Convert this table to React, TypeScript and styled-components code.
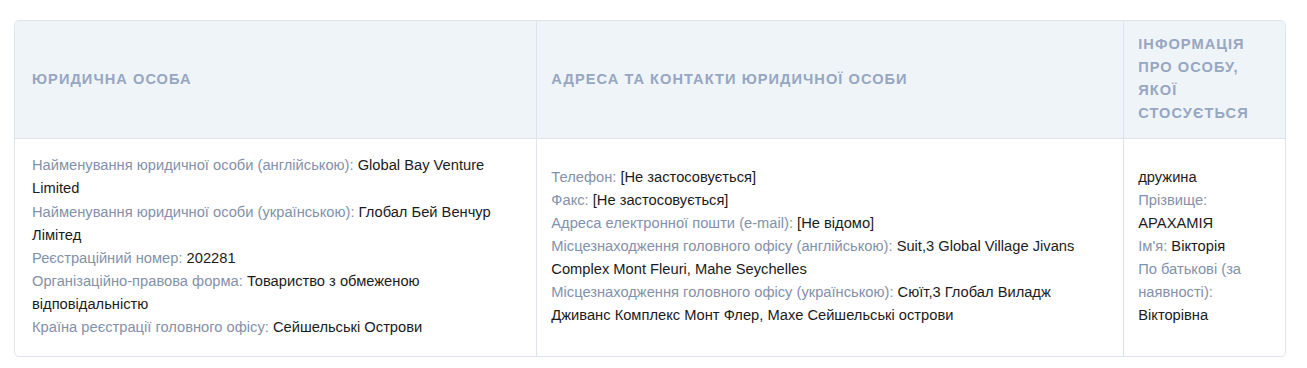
import React from "react"
import styled, { createGlobalStyle } from "styled-components"

const GlobalStyle = createGlobalStyle`
  body {
    margin: 0;
    background: #fff;
    font-family: "Liberation Sans", Arial, sans-serif;
  }
`

type Field = { label: string; value: string }

const entity: Field[] = [
  { label: "Найменування юридичної особи (англійською):", value: "Global Bay Venture Limited" },
  { label: "Найменування юридичної особи (українською):", value: "Глобал Бей Венчур Лімітед" },
  { label: "Реєстраційний номер:", value: "202281" },
  { label: "Організаційно-правова форма:", value: "Товариство з обмеженою відповідальністю" },
  { label: "Країна реєстрації головного офісу:", value: "Сейшельські Острови" },
]

const contacts: Field[] = [
  { label: "Телефон:", value: "[Не застосовується]" },
  { label: "Факс:", value: "[Не застосовується]" },
  { label: "Адреса електронної пошти (e-mail):", value: "[Не відомо]" },
  {
    label: "Місцезнаходження головного офісу (англійською):",
    value: "Suit,3 Global Village Jivans Complex Mont Fleuri, Mahe Seychelles",
  },
  {
    label: "Місцезнаходження головного офісу (українською):",
    value: "Сюїт,3 Глобал Виладж Дживанс Комплекс Монт Флер, Махе Сейшельські острови",
  },
]

const person: Field[] = [
  { label: "Прізвище:", value: "АРАХАМІЯ" },
  { label: "Ім'я:", value: "Вікторія" },
  { label: "По батькові (за наявності):", value: "Вікторівна" },
]

const FieldList = ({ items }: { items: Field[] }) => (
  <>
    {items.map((f) => (
      <Line key={f.label}>
        <Label>{f.label}</Label> {f.value}
      </Line>
    ))}
  </>
)

const App = () => {
  return (
    <Page>
      <GlobalStyle />
      <Card>
        <Table>
          <colgroup>
            <col style={{ width: 521 }} />
            <col style={{ width: 586 }} />
            <col style={{ width: 161 }} />
          </colgroup>
          <thead>
            <tr>
              <Th $first>Юридична особа</Th>
              <Th>Адреса та контакти юридичної особи</Th>
              <Th>Інформація про особу, якої стосується</Th>
            </tr>
          </thead>
          <tbody>
            <tr>
              <Td $first>
                <FieldList items={entity} />
              </Td>
              <Td>
                <FieldList items={contacts} />
              </Td>
              <Td>
                <Line>дружина</Line>
                <FieldList items={person} />
              </Td>
            </tr>
          </tbody>
        </Table>
      </Card>
    </Page>
  )
}

export default App

const Page = styled.div`
  padding: 20px 23px 12px 14px;
`

const Card = styled.div`
  width: 1270px;
  border: 1px solid #dfe4ec;
  border-radius: 5px;
  overflow: hidden;
`

const Table = styled.table`
  width: 100%;
  table-layout: fixed;
  border-collapse: collapse;
  font-size: 14.7px;
  line-height: 23.1px;
`

const Th = styled.th<{ $first?: boolean }>`
  background: #eff4f9;
  color: #97a6c1;
  font-weight: 700;
  font-size: 14.6px;
  letter-spacing: 1.05px;
  text-transform: uppercase;
  text-align: left;
  vertical-align: middle;
  padding: 12px 14px 13px ${(p) => (p.$first ? "17px" : "14px")};
  border-bottom: 1px solid #dfe4ec;
  border-left: ${(p) => (p.$first ? "none" : "1px solid #dfe4ec")};
`

const Td = styled.td<{ $first?: boolean }>`
  color: #1b1b1b;
  vertical-align: middle;
  padding: 15px 14px 17px ${(p) => (p.$first ? "17px" : "14px")};
  border-left: ${(p) => (p.$first ? "none" : "1px solid #dfe4ec")};
`

const Line = styled.div`
  margin: 0;
`

const Label = styled.span`
  color: #8491aa;
`
